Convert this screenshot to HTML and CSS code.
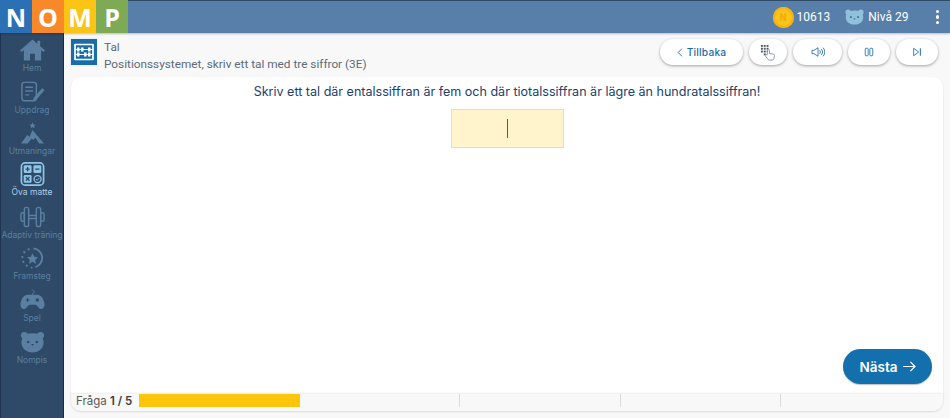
FILE: index.html
```html
<!DOCTYPE html>
<html lang="sv">
<head>
<meta charset="utf-8">
<title>Nomp</title>
<link rel="stylesheet" href="styles.css">
</head>
<body>
<header class="topbar">
  <div class="logo">
    <span class="l l-n">N</span><span class="l l-o">O</span><span class="l l-m">M</span><span class="l l-p">P</span>
  </div>
  <div class="stats">
    <span class="stat coins"><span class="coin"><span>N</span></span>10613</span>
    <span class="stat level">
      <svg class="bear-top" viewBox="0 0 24 20"><circle cx="4" cy="4" r="3.500" fill="#8fc0dc"/><circle cx="20" cy="4" r="3.500" fill="#8fc0dc"/><path fill="#8fc0dc" d="M6 2.500c4-1 8-1 12 0 3 1 5 3 5 8 0 6-5 9-11 9S1 16.500 1 10.500c0-5 2-7 5-8z"/><circle cx="7.500" cy="10" r="1.100" fill="#26415f"/><circle cx="16.500" cy="10" r="1.100" fill="#26415f"/><path fill="#26415f" d="M10.800 12h2.400L12 13.500z"/></svg>
      Nivå 29
    </span>
    <span class="kebab"><i></i><i></i><i></i></span>
  </div>
</header>
<div class="shell">
  <nav class="sidebar">
    <a class="nav"><svg viewBox="0 0 26 22" class="ni"><path fill="#5a7fa0" d="M13 0 0 11.500l1.500 1.700L4 11v11h6.500v-7h5v7H22V11l2.500 2.200 1.500-1.700L21 7V1.500h-3v3z"/></svg>Hem</a>
    <a class="nav"><svg viewBox="0 0 26 22" class="ni"><g fill="none" stroke="#5a7fa0" stroke-width="1.500"><rect x="2" y="1" width="15" height="19" rx="2.500"/><path d="M5.500 6h8M5.500 10h8M5.500 14h4"/></g><path fill="#5a7fa0" d="M23 7l2.500 2-8.500 10-3.500 1.500.8-3.600z"/></svg>Uppdrag</a>
    <a class="nav"><svg viewBox="0 0 26 22" class="ni"><path fill="#5a7fa0" d="M13 0l1 2.200 2.300.2-1.700 1.500.6 2.200-2.200-1.200-2 1.200.5-2.200-1.700-1.500 2.300-.2zM13 8l6 7 6 7h-5l-4-6-2 2-2-1-4 5H1l6.500-9 2.500 2z"/></svg>Utmaningar</a>
    <a class="nav active"><svg viewBox="0 0 26 26" class="ni ni-tall"><rect x="1" y="1" width="24" height="24" rx="4" fill="none" stroke="#8fc6e6" stroke-width="1.800"/><rect x="3.500" y="3.500" width="8.500" height="8.500" rx="1.500" fill="#8fc6e6"/><rect x="14" y="3.500" width="8.500" height="8.500" rx="1.500" fill="#8fc6e6"/><rect x="3.500" y="14" width="8.500" height="8.500" rx="1.500" fill="#8fc6e6"/><circle cx="18.500" cy="18.500" r="3.800" fill="none" stroke="#8fc6e6" stroke-width="1.400"/><path d="M16.800 18.500l1.300 1.300 2.400-2.600" fill="none" stroke="#8fc6e6"/><path d="M5.500 7.700h4.500M7.700 5.500V10M16 7.700h4.500M5.800 16.300l4 4M9.800 16.300l-4 4" stroke="#2e4a68" stroke-width="1.400"/></svg>Öva matte</a>
    <a class="nav"><svg viewBox="0 0 26 22" class="ni"><g fill="none" stroke="#5a7fa0" stroke-width="1.500"><rect x="4.500" y="1" width="4.500" height="20" rx="2.200"/><rect x="17" y="1" width="4.500" height="20" rx="2.200"/><path d="M9 9.500h8M9 12.500h8"/><rect x="1" y="6.500" width="3.500" height="9" rx="1.500"/><rect x="21.500" y="6.500" width="3.500" height="9" rx="1.500"/></g></svg>Adaptiv träning</a>
    <a class="nav"><svg viewBox="0 0 26 22" class="ni"><path fill="none" stroke="#5a7fa0" stroke-width="2" d="M14 1a10 10 0 0 1 2 19.500"/><path fill="#5a7fa0" d="M13 6l1.800 3.800 4 .4-3 2.800.9 4.200-3.700-2.200-3.700 2.200.9-4.200-3-2.800 4-.4z"/><g fill="#5a7fa0"><circle cx="9" cy="2" r="1.200"/><circle cx="4.500" cy="5" r="1.200"/><circle cx="2.500" cy="10" r="1.200"/><circle cx="3.500" cy="15" r="1.200"/><circle cx="7" cy="19" r="1.200"/><circle cx="12" cy="21" r="1"/></g></svg>Framsteg</a>
    <a class="nav"><svg viewBox="0 0 26 22" class="ni"><path fill="none" stroke="#5a7fa0" stroke-width="1" d="M13 6C13 3 15 4 15 2.500S13 1 12.500 0"/><path fill="#5a7fa0" d="M8 5.500h10c4 0 6.500 4 7.500 9.500.5 4-2.500 6.500-5 5-2-1.500-3-4-4.500-4h-6c-1.500 0-2.500 2.500-4.500 4-2.500 1.500-5.500-1-5-5C1.500 9.500 4 5.500 8 5.500z"/><path stroke="#2e4a68" stroke-width="1.200" d="M6 11h4M8 9v4"/><circle cx="18" cy="11" r="1.800" fill="#2e4a68"/></svg>Spel</a>
    <a class="nav"><svg viewBox="0 0 26 22" class="ni"><circle cx="4.500" cy="4" r="3.500" fill="#5a7fa0"/><circle cx="21.500" cy="4" r="3.500" fill="#5a7fa0"/><path fill="#5a7fa0" d="M7 2.500c4-.8 8-.8 12 0 3 1 5 3.500 5.500 8 .5 7-5 11.500-11.500 11.500S1 17.500 1.500 10.500C2 6 4 3.500 7 2.500z"/><circle cx="8.500" cy="11" r="1.300" fill="#2e4a68"/><circle cx="17.500" cy="11" r="1.300" fill="#2e4a68"/><path fill="#2e4a68" d="M11.500 13h3L13 15z"/></svg>Nompis</a>
  </nav>
  <main class="main">
    <div class="head">
      <span class="abacus"><svg viewBox="0 0 26 26"><rect width="26" height="26" fill="#1a6ea8"/><g stroke="#fff" fill="none"><path stroke-width="1.700" d="M4 5v16M22 5v16M4 5.500h18M4 20.500h18"/><path stroke-width="1" d="M4 10.500h18M4 15.500h18"/></g><g fill="#fff"><rect x="6" y="8.500" width="2.500" height="4"/><rect x="10" y="8.500" width="2.500" height="4"/><rect x="17" y="8.500" width="2.500" height="4"/><rect x="6" y="13.500" width="2.500" height="4"/><rect x="13" y="13.500" width="2.500" height="4"/><rect x="17" y="13.500" width="2.500" height="4"/></g></svg></span>
      <div class="crumbs"><div>Tal</div><div>Positionssystemet, skriv ett tal med tre siffror (3E)</div></div>
      <div class="tools">
        <button class="tbtn back"><svg viewBox="0 0 8 12" class="chev"><path d="M6.500 1 1.500 6l5 5" fill="none" stroke="#1a6ea8" stroke-width="1.200"/></svg>Tillbaka</button>
        <button class="tbtn keys"><svg viewBox="0 0 18 18" class="i18"><g fill="#4a5560"><rect x="1" y="1" width="2" height="2"/><rect x="4" y="1" width="2" height="2"/><rect x="7" y="1" width="2" height="2"/><rect x="1" y="4" width="2" height="2"/><rect x="4" y="4" width="2" height="2"/><rect x="7" y="4" width="2" height="2"/><rect x="1" y="7" width="2" height="2"/><rect x="4" y="7" width="2" height="2"/><rect x="7" y="7" width="2" height="2"/><rect x="4" y="10" width="2" height="2"/></g><path d="M8 9V6.500c0-1.300 2-1.300 2 0V10l4 .8c1 .2 1.500 1 1.300 2l-.6 2.700c-.1.800-.8 1.500-1.700 1.500H10c-.7 0-1.200-.3-1.600-.8L6 13c-.7-1 .6-2.200 1.500-1.300z" fill="#fff" stroke="#8a939b" stroke-width="1"/></svg></button>
        <button class="tbtn snd"><svg viewBox="0 0 16 14" class="i14"><path d="M1 5v4h2.500L8 12V2L3.500 5z" fill="none" stroke="#1a6ea8" stroke-width="1"/><path d="M10 5a3 3 0 0 1 0 4M12 3.500a5.500 5.500 0 0 1 0 7M14 2a8 8 0 0 1 0 10" fill="none" stroke="#1a6ea8" stroke-width="1"/></svg></button>
        <button class="tbtn pause"><svg viewBox="0 0 12 12" class="i10"><rect x="1.500" y="1.500" width="3.500" height="9" rx="1" fill="none" stroke="#1a6ea8"/><rect x="7" y="1.500" width="3.500" height="9" rx="1" fill="none" stroke="#1a6ea8"/></svg></button>
        <button class="tbtn skip"><svg viewBox="0 0 12 12" class="i10"><path d="M2 1.500v9L8 6z" fill="none" stroke="#1a6ea8"/><path d="M10 1.500v9" stroke="#1a6ea8" stroke-width="1.200"/></svg></button>
      </div>
    </div>
    <section class="card">
      <div class="body">
        <p class="question">Skriv ett tal där entalssiffran är fem och där tiotalssiffran är lägre än hundratalssiffran!</p>
        <div class="answer"><span class="caret"></span></div>
        <div class="actions"><button class="next">Nästa <svg viewBox="0 0 14 12" class="arrow"><path d="M0 6h12.500M8 1l5 5-5 5" fill="none" stroke="#fff" stroke-width="1.300"/></svg></button></div>
      </div>
      <div class="progress">
        <span class="plabel">Fråga <b>1 / 5</b></span>
        <div class="track"><span class="seg done"></span><span class="seg"></span><span class="seg"></span><span class="seg"></span><span class="seg"></span></div>
      </div>
    </section>
  </main>
</div>
</body>
</html>
```
FILE: styles.css
```css
* { box-sizing: border-box; }
html, body { margin: 0; height: 100%; overflow: hidden; }
body { width: 950px; height: 418px; background: #f8f8f8; font-family: Inter, "Liberation Sans", sans-serif; display: flex; flex-direction: column; }
.topbar { height: 33px; flex: none; background: #577fa9; border-top: 1px solid #2f4b6a; box-shadow: 0 1px 2px rgba(0,0,0,.25); display: flex; justify-content: space-between; align-items: stretch; position: relative; z-index: 2; }
.logo { display: flex; margin-top: -1px; }
.l { width: 32px; height: 33px; display: flex; align-items: center; justify-content: center; color: #fff; font: bold 25px "Open Sans", sans-serif; }
.l-n { background: #2b70b5; } .l-o { background: #f8882a; } .l-m { background: #fcc415; } .l-p { background: #7ea955; }
.stats { display: flex; align-items: center; color: #fff; font-size: 12px; font-family: Roboto, sans-serif; }
.stat { display: flex; align-items: center; }
.coins { gap: 3px; margin-right: 15px; }
.coin { width: 21px; height: 21px; border-radius: 50%; background: #fcc415; box-shadow: inset 0 0 0 2px #f5b01a; display: flex; align-items: center; justify-content: center; color: #eeab15; font-size: 10px; font-weight: bold; }
.level { gap: 4px; }
.bear-top { width: 19px; height: 16px; }
.kebab { display: flex; flex-direction: column; gap: 2px; margin: 0 11px 0 27px; }
.kebab i { width: 3.500px; height: 3.500px; border-radius: 50%; background: #fff; }
.shell { flex: 1; display: flex; min-height: 0; }
.sidebar { width: 64px; flex: none; background: #2e4a68; border-left: 1px solid #1d3350; border-right: 1px solid #162a4a; display: flex; flex-direction: column; align-items: center; padding-top: 6px; }
.nav { height: 41.700px; width: 100%; display: flex; flex-direction: column; align-items: center; justify-content: flex-start; color: #5a7fa0; font: 8.500px/10px Inter, "Liberation Sans", sans-serif; white-space: nowrap; }
.nav.active { color: #a9cfe8; }
.ni { width: 25px; height: 22px; margin-bottom: 2px; flex: none; }
.ni-tall { height: 24px; margin-bottom: 1px; margin-top: -2px; }
.main { flex: 1; min-width: 0; padding: 5px 7px 7px 7px; display: flex; flex-direction: column; }
.head { display: flex; align-items: flex-start; height: 39px; flex: none; }
.abacus { width: 26px; height: 26px; margin: 1px 7px 0 0; box-shadow: 0 0 0 1px #eee; flex: none; }
.abacus svg { display: block; width: 26px; height: 26px; }
.crumbs { color: #5d6b7b; font: 11.800px/16.500px Roboto, "Liberation Sans", sans-serif; margin-top: 1px; flex: 1; }
.tools { display: flex; gap: 6px; margin-top: 1px; padding-right: 5px; }
.tbtn { height: 26px; border: 0; border-radius: 13px; background: #fff; box-shadow: 0 1px 3px rgba(0,0,0,.35); padding: 0; display: flex; align-items: center; justify-content: center; }
.back { width: 83px; gap: 4px; color: #1a6ea8; font: 500 10.200px Inter, sans-serif; letter-spacing: .2px; }
.keys { width: 38px; } .snd { width: 49px; } .pause, .skip { width: 42px; }
.chev { width: 6px; height: 9px; }
.i18 { width: 17px; height: 17px; } .i14 { width: 14px; height: 12px; } .i10 { width: 10px; height: 10px; }
.card { flex: 1; background: #fff; border-radius: 10px; box-shadow: 0 1px 2px rgba(0,0,0,.12); display: flex; flex-direction: column; min-height: 0; }
.body { flex: 1; display: flex; flex-direction: column; align-items: center; min-height: 0; padding-top: 6px; }
.question { margin: 0; color: #22416a; font: 12.550px/17px Inter, "Liberation Sans", sans-serif; }
.answer { width: 113px; height: 39px; margin-top: 9px; background: #fff4cc; border: 1px solid #ecdfa3; display: flex; align-items: center; justify-content: center; }
.caret { width: 1px; height: 19px; background: #5b5b4e; }
.actions { margin-top: auto; align-self: flex-end; padding: 0 11px 10px 0; }
.next { width: 89px; height: 35px; border: 0; border-radius: 18px; background: #1470ac; color: #fff; font: 600 13.500px Inter, sans-serif; display: flex; align-items: center; justify-content: center; gap: 5px; padding: 0; box-shadow: 0 1px 1px rgba(0,0,0,.25); }
.arrow { width: 13px; height: 11px; }
.progress { height: 17px; flex: none; background: #f8f8f8; border-radius: 0 0 10px 10px; box-shadow: 0 -1px 2px rgba(0,0,0,.08); display: flex; align-items: flex-start; padding: 0 3px 0 5px; overflow: hidden; }
.plabel { width: 63px; flex: none; color: #5a5a5a; font: 11.500px/14px Inter, sans-serif; white-space: nowrap; }
.plabel b { font-weight: 600; color: #3c3c3c; }
.track { flex: 1; height: 13px; display: flex; align-self: flex-start; }
.seg { flex: 1; }
.seg + .seg + .seg { border-left: 1px solid #ddd; }
.seg.done { flex: none; width: 161px; background: #fdc60a; }
```
